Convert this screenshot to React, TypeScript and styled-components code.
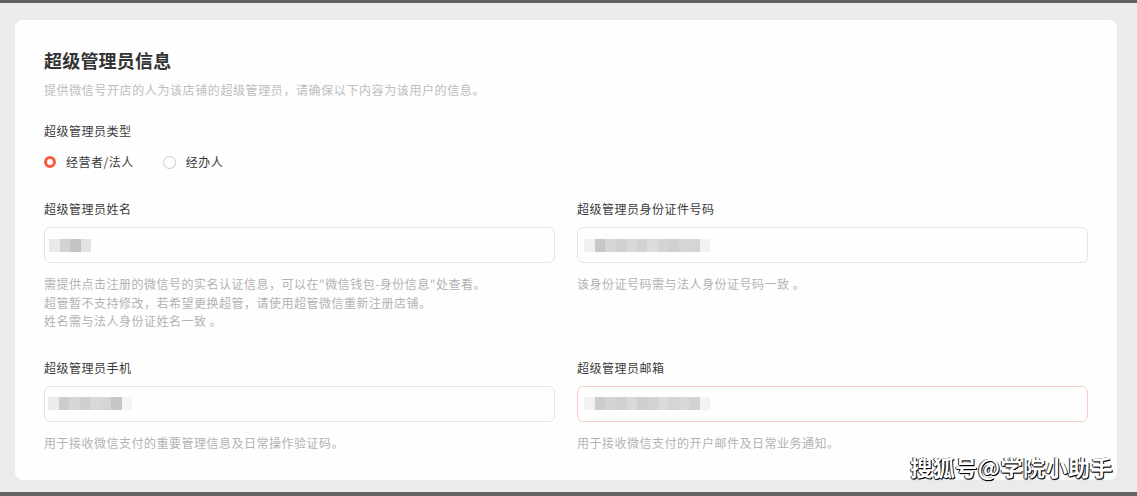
import React from 'react';
import styled, { createGlobalStyle } from 'styled-components';

const GlobalStyle = createGlobalStyle`
  html, body {
    margin: 0;
    padding: 0;
    background: #ebebeb;
  }
  body {
    font-family: 'Noto Sans CJK SC', 'Noto Sans', sans-serif;
  }
`;

interface FieldData {
  label: string;
  hints: string[];
  mosaic: string[];
  inset: number;
  error?: boolean;
}

const fields: FieldData[] = [
  {
    label: '超级管理员姓名',
    hints: [
      '需提供点击注册的微信号的实名认证信息，可以在"微信钱包-身份信息"处查看。',
      '超管暂不支持修改，若希望更换超管，请使用超管微信重新注册店铺。',
      '姓名需与法人身份证姓名一致 。',
    ],
    mosaic: ['#e9e9e9', '#d2d2d2', '#c4c4c4', '#e3e3e3'],
    inset: 4,
  },
  {
    label: '超级管理员身份证件号码',
    hints: ['该身份证号码需与法人身份证号码一致 。'],
    mosaic: ['#f0f0f0', '#c8c8c8', '#d6d6d6', '#d0d0d0', '#d8d8d8', '#d2d2d2', '#dcdcdc', '#d4d4d4', '#d0d0d0', '#d6d6d6', '#d4d4d4', '#f2f2f2'],
    inset: 6,
  },
  {
    label: '超级管理员手机',
    hints: ['用于接收微信支付的重要管理信息及日常操作验证码。'],
    mosaic: ['#ececec', '#cdcdcd', '#d6d6d6', '#cfcfcf', '#d8d8d8', '#d4d4d4', '#c6c6c6', '#f4f4f4'],
    inset: 3,
  },
  {
    label: '超级管理员邮箱',
    hints: ['用于接收微信支付的开户邮件及日常业务通知。'],
    mosaic: ['#f2f2f2', '#cdcdcd', '#d4d4d4', '#d0d0d0', '#d8d8d8', '#cfcfcf', '#d2d2d2', '#dadada', '#d4d4d4', '#d8d8d8', '#d2d2d2', '#f3f3f3'],
    inset: 6,
    error: true,
  },
];

const App = () => {
  return (
    <Page>
      <GlobalStyle />
      <TopBar />
      <Main>
        <Card>
          <Title>超级管理员信息</Title>
          <Subtitle>提供微信号开店的人为该店铺的超级管理员，请确保以下内容为该用户的信息。</Subtitle>
          <TypeLabel>超级管理员类型</TypeLabel>
          <RadioGroup>
            <RadioItem>
              <RadioDot checked />
              经营者/法人
            </RadioItem>
            <RadioItem>
              <RadioDot />
              经办人
            </RadioItem>
          </RadioGroup>
          <FieldGrid>
            {fields.map((f) => (
              <Field key={f.label}>
                <Label>{f.label}</Label>
                <InputBox error={f.error} inset={f.inset}>
                  <Mosaic>
                    {f.mosaic.map((c, i) => (
                      <Pixel key={i} style={{ background: c }} />
                    ))}
                  </Mosaic>
                </InputBox>
                <Hints>
                  {f.hints.map((h) => (
                    <div key={h}>{h}</div>
                  ))}
                </Hints>
              </Field>
            ))}
          </FieldGrid>
        </Card>
        <Watermark>搜狐号@学院小助手</Watermark>
      </Main>
      <BottomBar />
    </Page>
  );
};

const Page = styled.div`
  width: 1137px;
  height: 496px;
  display: flex;
  flex-direction: column;
  background: #ebebeb;
  overflow: hidden;
`;

const TopBar = styled.div`
  height: 3px;
  background: #616161;
`;

const BottomBar = styled.div`
  height: 4px;
  background: #646464;
`;

const Main = styled.div`
  position: relative;
  flex: 1;
  padding: 17px 20px 12px 15px;
`;

const Card = styled.div`
  height: 100%;
  box-sizing: border-box;
  background: #fefefe;
  border-radius: 8px;
  padding: 27px 29px 0 29px;
`;

const Title = styled.div`
  font-size: 18px;
  line-height: 26px;
  font-weight: 700;
  color: #333;
  letter-spacing: 0.2px;
`;

const Subtitle = styled.div`
  margin-top: 8px;
  font-size: 12px;
  line-height: 18px;
  color: #bdbdbd;
  letter-spacing: 0.6px;
`;

const Label = styled.div`
  font-size: 12px;
  line-height: 18px;
  color: #3a3a3a;
  letter-spacing: 0.5px;
`;

const TypeLabel = styled(Label)`
  margin-top: 23px;
`;

const RadioGroup = styled.div`
  display: flex;
  align-items: center;
  gap: 29px;
  margin-top: 13px;
  height: 18px;
`;

const RadioItem = styled.label`
  display: flex;
  align-items: center;
  gap: 10px;
  font-size: 12px;
  line-height: 18px;
  color: #3a3a3a;
  letter-spacing: 0.5px;
`;

const RadioDot = styled.span<{ checked?: boolean }>`
  width: ${(p) => (p.checked ? '6px' : '11px')};
  height: ${(p) => (p.checked ? '6px' : '11px')};
  border-radius: 50%;
  background: #fff;
  border: ${(p) => (p.checked ? '3.5px solid #fa5b3d' : '1px solid #c9c9cf')};
`;

const FieldGrid = styled.div`
  display: grid;
  grid-template-columns: 511px 511px;
  column-gap: 22px;
  row-gap: 28px;
  margin-top: 29px;
`;

const Field = styled.div`
  display: flex;
  flex-direction: column;
`;

const InputBox = styled.div<{ error?: boolean; inset: number }>`
  margin-top: 9px;
  height: 36px;
  box-sizing: border-box;
  border: 1px solid ${(p) => (p.error ? '#f8cbc4' : '#e4e4e4')};
  border-radius: 6px;
  display: flex;
  align-items: center;
  padding-left: ${(p) => p.inset}px;
`;

const Mosaic = styled.div`
  display: flex;
  height: 13px;
  filter: blur(0.7px);
`;

const Pixel = styled.span`
  width: 10.5px;
  height: 100%;
`;

const Hints = styled.div`
  margin-top: 12px;
  font-size: 12px;
  line-height: 18.5px;
  color: #b3b3b3;
  letter-spacing: 0.5px;
`;

const Watermark = styled.div`
  position: absolute;
  right: 24px;
  bottom: 10px;
  font-size: 22px;
  font-weight: 700;
  color: #fff;
  letter-spacing: 0.5px;
  text-shadow: 1px 1px 0 #000, -1px 0 0 #333, 0 1px 1px #000;
`;

export default App;
